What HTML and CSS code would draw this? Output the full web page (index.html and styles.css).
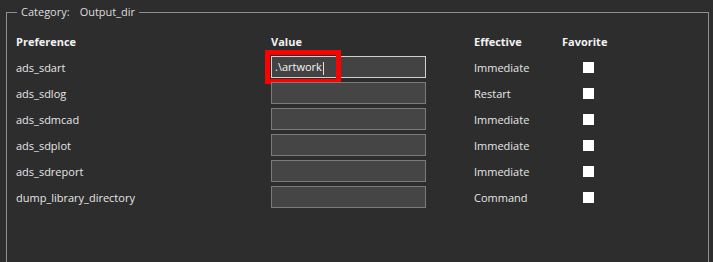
FILE: index.html
```html
<!DOCTYPE html>
<html lang="en">
<head>
    <meta charset="UTF-8">
    <title>Preferences - Output_dir</title>
    <link rel="stylesheet" href="styles.css">
</head>
<body>
    <fieldset class="group">
        <legend>Category:<span class="cat-name">Output_dir</span></legend>

        <div class="prefs">
            <div class="head">Preference</div>
            <div class="head">Value</div>
            <div class="head">Effective</div>
            <div class="head">Favorite</div>

            <div class="name">ads_sdart</div>
            <div class="value-cell">
                <div class="value active">.\artwork<span class="caret"></span></div>
                <div class="highlight"></div>
            </div>
            <div class="when">Immediate</div>
            <div class="fav"><span class="check"></span></div>

            <div class="name">ads_sdlog</div>
            <div class="value-cell"><div class="value"></div></div>
            <div class="when">Restart</div>
            <div class="fav"><span class="check"></span></div>

            <div class="name">ads_sdmcad</div>
            <div class="value-cell"><div class="value"></div></div>
            <div class="when">Immediate</div>
            <div class="fav"><span class="check"></span></div>

            <div class="name">ads_sdplot</div>
            <div class="value-cell"><div class="value"></div></div>
            <div class="when">Immediate</div>
            <div class="fav"><span class="check"></span></div>

            <div class="name">ads_sdreport</div>
            <div class="value-cell"><div class="value"></div></div>
            <div class="when">Immediate</div>
            <div class="fav"><span class="check"></span></div>

            <div class="name">dump_library_directory</div>
            <div class="value-cell"><div class="value"></div></div>
            <div class="when">Command</div>
            <div class="fav"><span class="check"></span></div>
        </div>
    </fieldset>
</body>
</html>
```

FILE: styles.css
```css
html, body {
    margin: 0;
    height: 100%;
    background: #2d2d2d;
    overflow: hidden;
}

body {
    font-family: "Open Sans", "Noto Sans", sans-serif;
    font-size: 11px;
    color: #e6e6e6;
}

.group {
    box-sizing: border-box;
    height: 262px;
    margin: 0 4px 0 6px;
    padding: 0 0 0 9px;
    border: 1px solid #8f8f8f;
    border-bottom: none;
}

.group legend {
    margin-left: 1px;
    padding: 0 4px;
    line-height: 24px;
    color: #dedede;
}

.cat-name {
    margin-left: 10px;
}

.prefs {
    display: grid;
    grid-template-columns: 255px 203px 88px auto;
    grid-auto-rows: 26px;
    align-items: center;
    margin-top: 4px;
}

.head {
    font-weight: bold;
    color: #f2f2f2;
}

.value-cell {
    position: relative;
    height: 22px;
}

.value {
    box-sizing: border-box;
    width: 155px;
    height: 22px;
    background: #454545;
    border: 1px solid #7b7b7b;
    padding: 0 3px;
    line-height: 20px;
    color: #f4f4f4;
}

.value.active {
    border-color: #d0d0d0;
    background: #434343;
}

.caret {
    display: inline-block;
    width: 1px;
    height: 13px;
    background: #e0e0e0;
    vertical-align: middle;
    margin-left: 1px;
}

/* red annotation box drawn over the edited field */
.highlight {
    position: absolute;
    left: -6px;
    top: -6px;
    width: 66px;
    height: 24px;
    border: 5px solid #ff0000;
}

.fav {
    padding-left: 21px;
}

.check {
    display: block;
    width: 11px;
    height: 11px;
    background: #ffffff;
}
```
